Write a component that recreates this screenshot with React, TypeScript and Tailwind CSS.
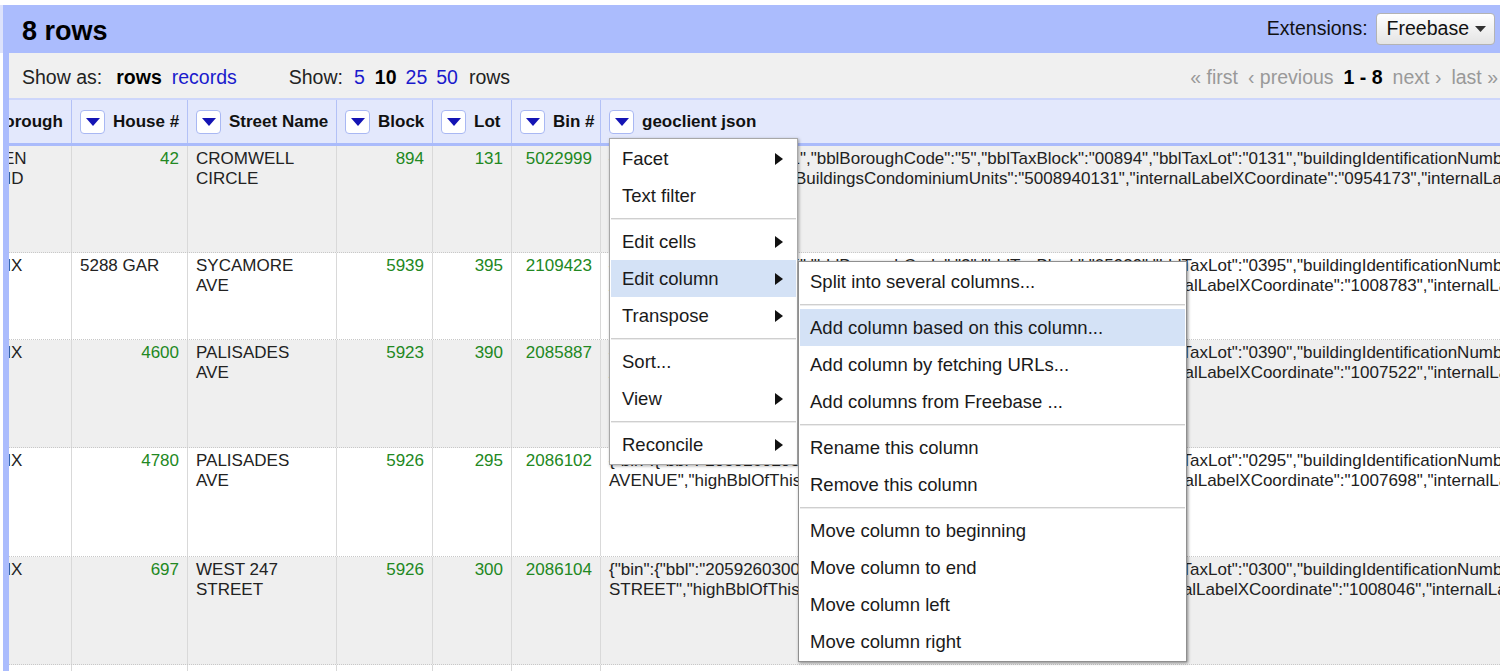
import React from "react";

type Row = {
  boro: string[];
  house: string;
  houseNum: boolean;
  street: string[];
  block: string;
  lot: string;
  bin: string;
  bbl: string;
  bc: string;
  tb: string;
  tl: string;
  suffix: string;
  xc: string;
  yc: string;
  h: string;
  odd: boolean;
};

const rows: Row[] = [
  { boro: ["STATEN", "ISLAND"], house: "42", houseNum: true, street: ["CROMWELL", "CIRCLE"], block: "894", lot: "131", bin: "5022999", bbl: "5008940131", bc: "5", tb: "00894", tl: "0131", suffix: "CIRCLE", xc: "0954173", yc: "0160044", h: "h-[107px]", odd: true },
  { boro: ["BRONX"], house: "5288 GAR", houseNum: false, street: ["SYCAMORE", "AVE"], block: "5939", lot: "395", bin: "2109423", bbl: "2059390395", bc: "2", tb: "05939", tl: "0395", suffix: "AVENUE", xc: "1008783", yc: "0265130", h: "h-[87px]", odd: false },
  { boro: ["BRONX"], house: "4600", houseNum: true, street: ["PALISADES", "AVE"], block: "5923", lot: "390", bin: "2085887", bbl: "2059230390", bc: "2", tb: "05923", tl: "0390", suffix: "AVENUE", xc: "1007522", yc: "0266342", h: "h-[108px]", odd: true },
  { boro: ["BRONX"], house: "4780", houseNum: true, street: ["PALISADES", "AVE"], block: "5926", lot: "295", bin: "2086102", bbl: "2059260295", bc: "2", tb: "05926", tl: "0295", suffix: "AVENUE", xc: "1007698", yc: "0267881", h: "h-[109px]", odd: false },
  { boro: ["BRONX"], house: "697", houseNum: true, street: ["WEST 247", "STREET"], block: "5926", lot: "300", bin: "2086104", bbl: "2059260300", bc: "2", tb: "05926", tl: "0300", suffix: "STREET", xc: "1008046", yc: "0267212", h: "h-[108px]", odd: true },
];

function line1(r: Row) {
  return `{"bin":{"bbl":"${r.bbl}","bblBoroughCode":"${r.bc}","bblTaxBlock":"${r.tb}","bblTaxLot":"${r.tl}","buildingIdentificationNumber":"${r.bin}","condominiumBillingBbl":"0000000000","cooperativeIdNumber":"0000"`;
}

function line2(r: Row) {
  return `${r.suffix}","highBblOfThisBuildingsCondominiumUnits":"${r.bbl}","internalLabelXCoordinate":"${r.xc}","internalLabelYCoordinate":"${r.yc}","lowBblOfThisBuildingsCondominiumUnits":"${r.bbl}"`;
}

function DropButton() {
  return (
    <div className="flex h-[24px] w-[25px] shrink-0 items-center justify-center rounded-[4px] border border-[#a9b8f3] bg-white">
      <svg width="14" height="8" viewBox="0 0 14 8">
        <path d="M0 0H14L7 8Z" fill="#1414b4" />
      </svg>
    </div>
  );
}

function Arrow() {
  return (
    <svg width="8" height="12" viewBox="0 0 8 12">
      <path d="M0 0L8 6L0 12Z" fill="#111" />
    </svg>
  );
}

function MenuItem({ label, arrow, active, sub }: { label: string; arrow?: boolean; active?: boolean; sub?: boolean }) {
  return (
    <div className={`flex h-[37px] items-center justify-between pr-[13px] ${sub ? "pl-[10px]" : "pl-[11px]"} ${active ? "bg-[#d4e2f6]" : ""}`}>
      <span>{label}</span>
      {arrow && <Arrow />}
    </div>
  );
}

function Sep() {
  return (
    <div className="flex h-[9px] items-center">
      <div className="w-full border-t border-b border-t-[#cfcfcf] border-b-[#ececec]" />
    </div>
  );
}

const headCell = "flex h-full shrink-0 items-center gap-2 border-r border-[#b3c1f6] pl-2";

export default function App() {
  return (
    <div className="relative flex h-[671px] w-[1500px] overflow-hidden bg-white pt-[5px] font-['Liberation_Sans',Arial,sans-serif] text-[#222]">
      <div className="h-[48px] w-[3px] shrink-0 bg-[#dde2fb]" />
      <div className="flex h-full min-w-0 flex-1 flex-col bg-[#abbcfd]">
        {/* title bar */}
        <div className="flex h-[48px] shrink-0 items-center justify-between pl-[19px] pr-[5px]">
          <h1 className="pt-[4px] text-[27px] font-bold text-black">8 rows</h1>
          <div className="flex items-center gap-2">
            <span className="text-[19.5px] text-[#111]">Extensions:</span>
            <button className="flex h-[32px] items-center gap-[6px] rounded-[4px] border border-[#b3b3b3] bg-gradient-to-b from-white to-[#e4e4e4] pl-[10px] pr-[8px] text-[19.5px] text-[#111]">
              Freebase
              <svg width="11" height="6" viewBox="0 0 11 6">
                <path d="M0 0H11L5.5 6Z" fill="#333" />
              </svg>
            </button>
          </div>
        </div>

        <div className="ml-[6px] flex min-h-0 flex-1 flex-col bg-white">
          {/* toolbar */}
          <div className="flex h-[47px] shrink-0 items-center justify-between border-b-2 border-[#cdd6fb] bg-[#f0f0f0] pl-[13px] pr-[2px] pt-[5px] text-[19.5px]">
            <div className="flex items-center">
              <span>Show as:</span>
              <span className="ml-[14px] font-bold text-black">rows</span>
              <span className="ml-[10px] text-[#1a1acc]">records</span>
              <span className="ml-[52px]">Show:</span>
              <span className="ml-[11px] text-[#1a1acc]">5</span>
              <span className="ml-[10px] font-bold text-black">10</span>
              <span className="ml-[9px] text-[#1a1acc]">25</span>
              <span className="ml-[9px] text-[#1a1acc]">50</span>
              <span className="ml-[11px]">rows</span>
            </div>
            <div className="flex items-center gap-[10px] text-[#999]">
              <span>« first</span>
              <span>‹ previous</span>
              <span className="font-bold text-black">1 - 8</span>
              <span>next ›</span>
              <span>last »</span>
            </div>
          </div>

          {/* column headers */}
          <div className="flex h-[46px] shrink-0 border-b-[3px] border-[#aabbfb] bg-[#e3e8fc] text-[17px] font-bold text-[#111]">
            <div className="h-full w-[63px] shrink-0 overflow-hidden border-r border-[#b3c1f6]">
              <div className="-ml-[58px] flex h-full w-[140px] items-center gap-2 pl-2">
                <DropButton />
                <span>Borough</span>
              </div>
            </div>
            <div className={`${headCell} w-[116px]`}><DropButton /><span>House #</span></div>
            <div className={`${headCell} w-[149px]`}><DropButton /><span>Street Name</span></div>
            <div className={`${headCell} w-[96px]`}><DropButton /><span>Block</span></div>
            <div className={`${headCell} w-[79px]`}><DropButton /><span>Lot</span></div>
            <div className={`${headCell} w-[89px]`}><DropButton /><span>Bin #</span></div>
            <div className="flex h-full min-w-0 flex-1 items-center gap-2 pl-2"><DropButton /><span>geoclient json</span></div>
          </div>

          {/* rows */}
          <div className="flex flex-col text-[17px] leading-5">
            {rows.map((r, i) => (
              <div key={i} className={`flex shrink-0 border-b border-dotted border-[#c8c8c8] ${r.h} ${r.odd ? "bg-[#efefef]" : "bg-white"}`}>
                <div className="w-[63px] shrink-0 overflow-hidden border-r border-[#d9d9d9]">
                  <div className="-ml-[55px] w-[140px] pl-2 pt-[3px]">
                    {r.boro.map((b) => (
                      <div key={b}>{b}</div>
                    ))}
                  </div>
                </div>
                <div className={`w-[116px] shrink-0 border-r border-[#d9d9d9] pt-[3px] ${r.houseNum ? "pr-2 text-right text-[#228822]" : "pl-2"}`}>{r.house}</div>
                <div className="w-[149px] shrink-0 border-r border-[#d9d9d9] pl-2 pr-2 pt-[3px]">
                  {r.street.map((s) => (
                    <div key={s}>{s}</div>
                  ))}
                </div>
                <div className="w-[96px] shrink-0 border-r border-[#d9d9d9] pr-2 pt-[3px] text-right text-[#228822]">{r.block}</div>
                <div className="w-[79px] shrink-0 border-r border-[#d9d9d9] pr-2 pt-[3px] text-right text-[#228822]">{r.lot}</div>
                <div className="w-[89px] shrink-0 border-r border-[#d9d9d9] pr-2 pt-[3px] text-right text-[#228822]">{r.bin}</div>
                <div className="min-w-0 flex-1 overflow-hidden whitespace-nowrap pl-2 pt-[3px]">
                  <div>{line1(r)}</div>
                  <div>{line2(r)}</div>
                </div>
              </div>
            ))}
            <div className="flex h-[60px] shrink-0 bg-white">
              <div className="w-[63px] shrink-0 border-r border-[#d9d9d9]" />
              <div className="w-[116px] shrink-0 border-r border-[#d9d9d9]" />
              <div className="w-[149px] shrink-0 border-r border-[#d9d9d9]" />
              <div className="w-[96px] shrink-0 border-r border-[#d9d9d9]" />
              <div className="w-[79px] shrink-0 border-r border-[#d9d9d9]" />
              <div className="w-[89px] shrink-0 border-r border-[#d9d9d9]" />
              <div className="flex-1" />
            </div>
          </div>
        </div>
      </div>

      {/* column menu */}
      <div className="absolute left-[609px] top-[138px] w-[189px] border border-[#a8a8a8] bg-white p-px text-[18.5px] text-[#1a1a1a] shadow-[1px_1px_3px_rgba(0,0,0,0.35)]">
        <MenuItem label="Facet" arrow />
        <MenuItem label="Text filter" />
        <Sep />
        <MenuItem label="Edit cells" arrow />
        <MenuItem label="Edit column" arrow active />
        <MenuItem label="Transpose" arrow />
        <Sep />
        <MenuItem label="Sort..." />
        <MenuItem label="View" arrow />
        <Sep />
        <MenuItem label="Reconcile" arrow />
      </div>

      {/* edit column submenu */}
      <div className="absolute left-[798px] top-[261px] w-[389px] border border-[#8f8f8f] bg-white p-px text-[18.5px] text-[#1a1a1a] shadow-[1px_1px_3px_rgba(0,0,0,0.45)]">
        <MenuItem label="Split into several columns..." sub />
        <Sep />
        <MenuItem label="Add column based on this column..." sub active />
        <MenuItem label="Add column by fetching URLs..." sub />
        <MenuItem label="Add columns from Freebase ..." sub />
        <Sep />
        <MenuItem label="Rename this column" sub />
        <MenuItem label="Remove this column" sub />
        <Sep />
        <MenuItem label="Move column to beginning" sub />
        <MenuItem label="Move column to end" sub />
        <MenuItem label="Move column left" sub />
        <MenuItem label="Move column right" sub />
      </div>
    </div>
  );
}
